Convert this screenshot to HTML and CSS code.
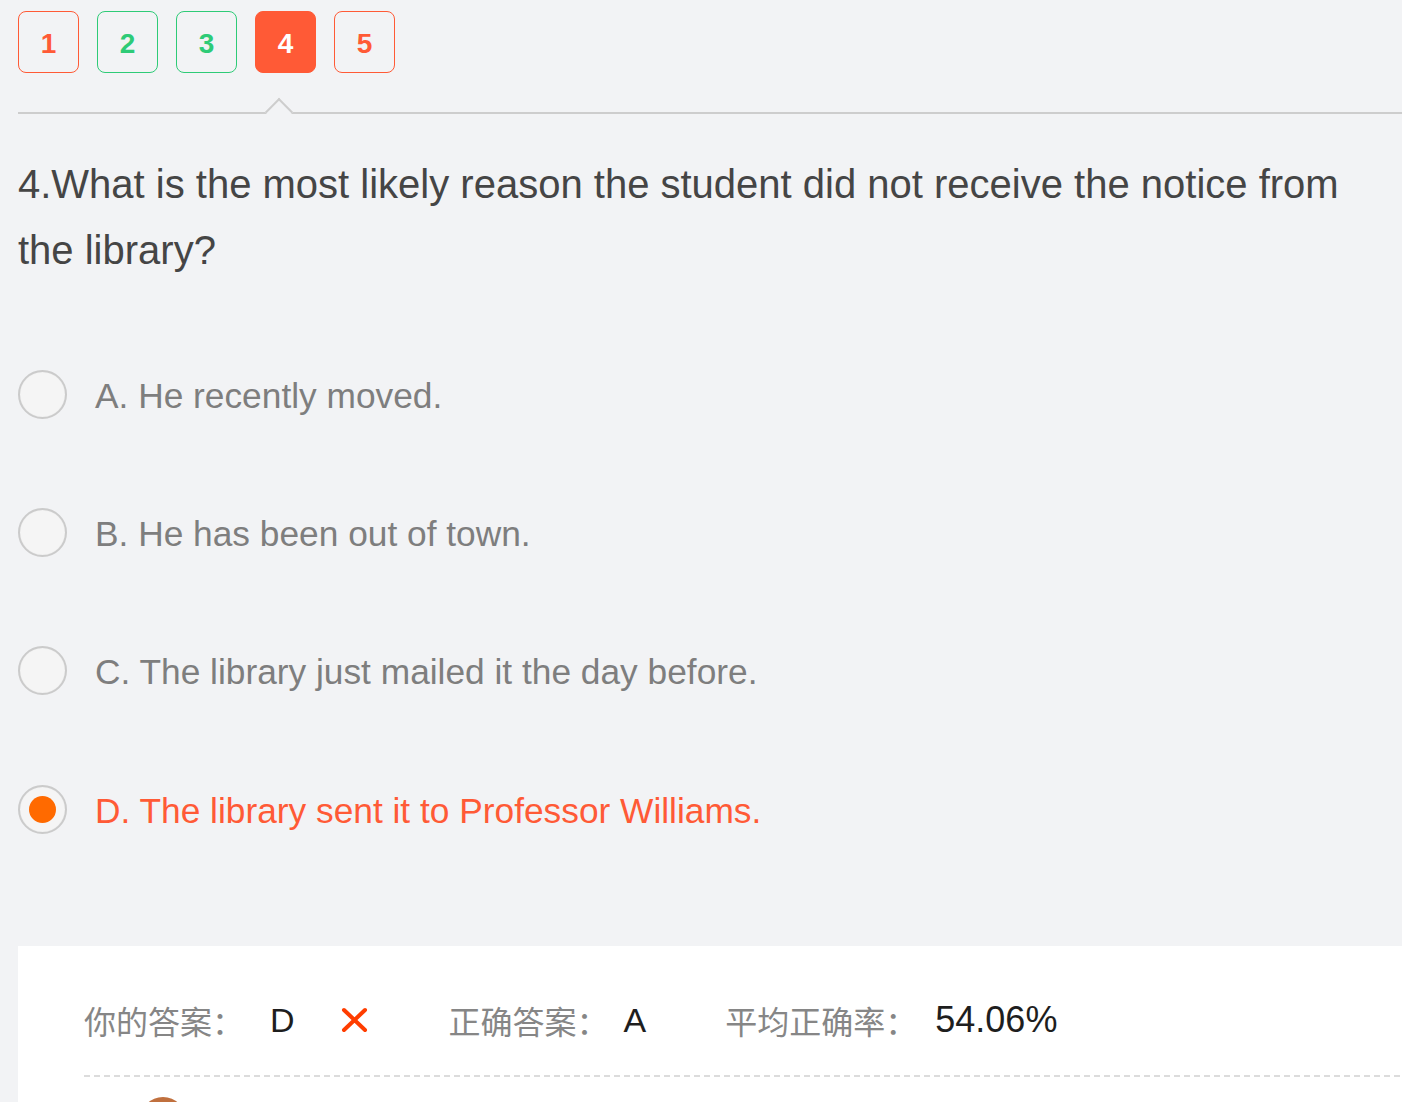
FILE: index.html
```html
<!DOCTYPE html>
<html lang="zh-CN">
<head>
<meta charset="utf-8">
<title>Question 4</title>
<link rel="stylesheet" href="styles.css">
</head>
<body>
<div class="page">
  <nav class="qnav">
    <span class="qbtn wrong">1</span>
    <span class="qbtn right">2</span>
    <span class="qbtn right">3</span>
    <span class="qbtn wrong current">4</span>
    <span class="qbtn wrong">5</span>
  </nav>
  <div class="divider"><span class="caret"></span></div>

  <h2 class="question">4.What is the most likely reason the student did not receive the notice from the library?</h2>

  <ul class="options">
    <li class="option"><span class="radio"></span><span class="otext">A. He recently moved.</span></li>
    <li class="option"><span class="radio"></span><span class="otext">B. He has been out of town.</span></li>
    <li class="option"><span class="radio"></span><span class="otext">C. The library just mailed it the day before.</span></li>
    <li class="option selected"><span class="radio"></span><span class="otext">D. The library sent it to Professor Williams.</span></li>
  </ul>

  <section class="result">
    <div class="result-row">
      <span class="label">你的答案：</span><span class="val val-your">D</span>
      <svg class="xmark" width="27" height="26" viewBox="0 0 27 26"><path d="M3 3 L24 23 M24 3 L3 23" stroke="#ff3d00" stroke-width="4" stroke-linecap="round" fill="none"/></svg>
      <span class="label label-correct">正确答案：</span><span class="val val-correct">A</span>
      <span class="label label-avg">平均正确率：</span><span class="val val-avg">54.06%</span>
    </div>
    <div class="dash"></div>
    <div class="avatar-row"><span class="avatar"></span></div>
  </section>
</div>
</body>
</html>
```

FILE: styles.css
```css
html, body {
  margin: 0;
  padding: 0;
  background: #f2f3f5;
  overflow: hidden;
}
body {
  font-family: "Liberation Sans", "Noto Sans CJK SC", Arial, sans-serif;
}
.page {
  padding-left: 18px;
}
.qnav {
  display: flex;
  gap: 18px;
  padding-top: 11px;
}
.qbtn {
  box-sizing: border-box;
  width: 61px;
  height: 62px;
  padding-top: 4px;
  border-radius: 8px;
  border: 1.5px solid;
  display: flex;
  align-items: center;
  justify-content: center;
  font-size: 28px;
  font-weight: bold;
}
.qbtn.wrong { border-color: #ff5a36; color: #ff5a36; }
.qbtn.right { border-color: #2ecb77; color: #2ecb77; }
.qbtn.current { background: #ff5a36; color: #fff; }

.divider {
  position: relative;
  margin-top: 39px;
  height: 2px;
  background: #cdcdcd;
}
.caret {
  position: absolute;
  left: 251px;
  top: -10px;
  width: 20px;
  height: 20px;
  background: #f2f3f5;
  border-left: 2px solid #cdcdcd;
  border-top: 2px solid #cdcdcd;
  transform: rotate(45deg);
  box-sizing: border-box;
}

.question {
  margin: 37px 0 0;
  font-size: 40px;
  font-weight: normal;
  line-height: 66px;
  color: #454545;
  padding-right: 10px;
}

.options {
  list-style: none;
  margin: 42px 0 0;
  padding: 0;
}
.option {
  height: 138.4px;
  display: flex;
  align-items: center;
}
.radio {
  box-sizing: border-box;
  width: 49px;
  height: 49px;
  border-radius: 50%;
  border: 2px solid #cbcbcb;
  background: #f5f5f5;
  box-shadow: inset 0 0 1px rgba(0,0,0,0.1);
  display: flex;
  align-items: center;
  justify-content: center;
  flex: none;
}
.otext {
  margin-left: 28px;
  padding-top: 3px;
  font-size: 35.3px;
  color: #7e7e7e;
}
.option.selected .radio::after {
  content: "";
  width: 27px;
  height: 27px;
  border-radius: 50%;
  background: #ff6a00;
}
.option.selected .otext { color: #ff5a36; }

.result {
  margin-top: 67px;
  background: #fff;
  padding-left: 66px;
  height: 200px;
}
.result-row {
  display: flex;
  align-items: center;
  height: 129px;
  padding-top: 20px;
  box-sizing: border-box;
  font-size: 34px;
}
.label {
  color: #868686;
  font-size: 32px;
}
.val {
  color: #1e1e1e;
}
.val-your { margin-left: 26px; }
.xmark { margin-left: 46px; }
.label-correct { margin-left: 81px; }
.val-correct { margin-left: 15px; }
.label-avg { margin-left: 79px; }
.val-avg { margin-left: 18px; font-size: 36px; }

.dash {
  height: 2px;
  background: repeating-linear-gradient(90deg, #dcdcdc 0 6px, transparent 6px 10px);
}
.avatar-row {
  padding-left: 56px;
  padding-top: 20px;
}
.avatar {
  display: block;
  width: 46px;
  height: 46px;
  border-radius: 50%;
  background: #c0703e;
}
```
